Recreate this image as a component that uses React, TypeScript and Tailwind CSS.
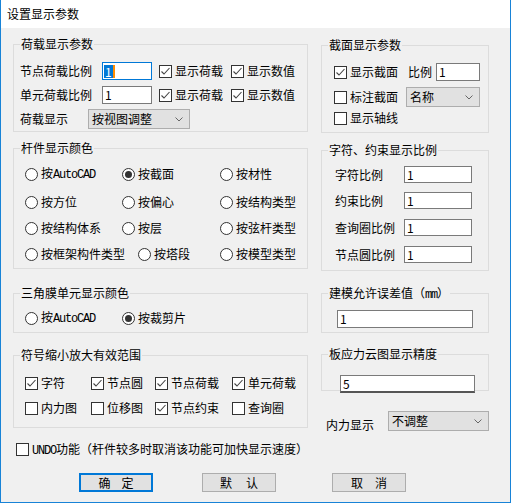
import React from "react";

const mono = "font-['Liberation_Mono',monospace] tracking-[-1.2px]";

function CheckBox({ checked }: { checked?: boolean }) {
  return (
    <span className="flex h-[13px] w-[13px] shrink-0 items-center justify-center border border-[#333333] bg-white">
      {checked && (
        <svg width="11" height="11" viewBox="0 0 11 11">
          <path d="M1.5 5.5L4 8L9.5 2" fill="none" stroke="#444444" strokeWidth="1.1" />
        </svg>
      )}
    </span>
  );
}

function Radio({ checked }: { checked?: boolean }) {
  return (
    <span className="flex h-[13px] w-[13px] shrink-0 items-center justify-center rounded-full border border-[#333333] bg-white">
      {checked && <span className="h-[7px] w-[7px] rounded-full bg-[#333333]" />}
    </span>
  );
}

function Check({ label, checked, className = "" }: { label: React.ReactNode; checked?: boolean; className?: string }) {
  return (
    <div className={`flex items-center gap-[3px] ${className}`}>
      <CheckBox checked={checked} />
      <span className="whitespace-nowrap">{label}</span>
    </div>
  );
}

function Option({ label, checked, className = "" }: { label: React.ReactNode; checked?: boolean; className?: string }) {
  return (
    <div className={`flex items-center gap-[3px] ${className}`}>
      <Radio checked={checked} />
      <span className="whitespace-nowrap">{label}</span>
    </div>
  );
}

function Group({ title, className = "", children }: { title: React.ReactNode; className?: string; children: React.ReactNode }) {
  return (
    <div className={`relative border border-[#dcdcdc] ${className}`}>
      <span className="absolute -top-[9px] left-[6px] bg-[#f0f0f0] px-[1px] leading-[16px] whitespace-nowrap">{title}</span>
      {children}
    </div>
  );
}

function Edit({ value, className = "" }: { value: string; className?: string }) {
  return (
    <div className={`flex items-center border border-[#7a7a7a] bg-white pl-[2px] ${className}`}>
      {value}
    </div>
  );
}

function Combo({ value, className = "" }: { value: string; className?: string }) {
  return (
    <div className={`flex items-center justify-between border border-[#adadad] bg-[#e1e1e1] pl-[3px] pr-[6px] ${className}`}>
      <span className="whitespace-nowrap">{value}</span>
      <svg width="8" height="5" viewBox="0 0 8 5">
        <path d="M0.5 0.5L4 4L7.5 0.5" fill="none" stroke="#666666" />
      </svg>
    </div>
  );
}

function Button({ a, b, gap, primary }: { a: string; b: string; gap: string; primary?: boolean }) {
  return (
    <div
      className={`flex h-[19px] w-[74px] items-center justify-center bg-[#e1e1e1] ${gap} ${
        primary ? "border-2 border-[#0078d7]" : "border border-[#adadad]"
      }`}
    >
      <span>{a}</span>
      <span>{b}</span>
    </div>
  );
}

export default function App() {
  const Auto = <span className={mono}>AutoCAD</span>;

  return (
    <div className="flex h-[503px] w-[511px] flex-col border-x border-b border-[#1883d7] bg-[#f0f0f0] font-['Noto_Sans_CJK_SC','Noto_Sans',sans-serif] text-[12px] leading-[16px] text-black">
      {/* title bar */}
      <div className="flex h-[28px] shrink-0 items-center bg-white pl-[6px]">设置显示参数</div>

      <div className="flex gap-[13px] pl-[12px]">
        {/* left column */}
        <div className="flex w-[295px] flex-col">
          <Group title="荷载显示参数" className="mt-[16px] h-[88px] pl-[6px] pt-[17px]">
            <div className="flex h-[18px] items-center">
              <span className="w-[82px]">节点荷载比例</span>
              <div className="flex h-[18px] w-[50px] items-center border border-[#0078d7] bg-white pl-[1px]">
                <span className="bg-[#0078d7] px-[1px] leading-[13px] text-white">1</span>
                <span className="h-[13px] w-[2px] bg-[#ff8c00]" />
              </div>
              <Check label="显示荷载" checked className="ml-[7px] w-[72px]" />
              <Check label="显示数值" checked />
            </div>
            <div className="mt-[6px] flex h-[18px] items-center">
              <span className="w-[82px]">单元荷载比例</span>
              <Edit value="1" className="h-[18px] w-[50px]" />
              <Check label="显示荷载" checked className="ml-[7px] w-[72px]" />
              <Check label="显示数值" checked />
            </div>
            <div className="mt-[5px] flex items-center">
              <span className="w-[68px]">荷载显示</span>
              <Combo value="按视图调整" className="h-[20px] w-[102px]" />
            </div>
          </Group>

          <Group title="杆件显示颜色" className="mt-[16px] h-[121px] pl-[11px] pt-[17px]">
            <div className="flex h-[16px] items-center">
              <Option label={<>按{Auto}</>} className="w-[97px]" />
              <Option label="按截面" checked className="w-[98px]" />
              <Option label="按材性" />
            </div>
            <div className="mt-[12px] flex h-[16px] items-center">
              <Option label="按方位" className="w-[97px]" />
              <Option label="按偏心" className="w-[98px]" />
              <Option label="按结构类型" />
            </div>
            <div className="mt-[10px] flex h-[16px] items-center">
              <Option label="按结构体系" className="w-[97px]" />
              <Option label="按层" className="w-[98px]" />
              <Option label="按弦杆类型" />
            </div>
            <div className="mt-[10px] flex h-[16px] items-center">
              <Option label="按框架构件类型" className="w-[113px]" />
              <Option label="按塔段" className="w-[82px]" />
              <Option label="按模型类型" />
            </div>
          </Group>

          <Group title="三角膜单元显示颜色" className="mt-[24px] h-[40px] pl-[11px] pt-[16px]">
            <div className="flex h-[16px] items-center">
              <Option label={<>按{Auto}</>} className="w-[97px]" />
              <Option label="按裁剪片" checked />
            </div>
          </Group>

          <Group title="符号缩小放大有效范围" className="mt-[22px] h-[73px] pl-[11px] pt-[19px]">
            <div className="flex h-[16px] items-center">
              <Check label="字符" checked className="w-[66px]" />
              <Check label="节点圆" checked className="w-[64px]" />
              <Check label="节点荷载" checked className="w-[77px]" />
              <Check label="单元荷载" checked />
            </div>
            <div className="mt-[9px] flex h-[16px] items-center">
              <Check label="内力图" className="w-[66px]" />
              <Check label="位移图" className="w-[64px]" />
              <Check label="节点约束" checked className="w-[77px]" />
              <Check label="查询圈" />
            </div>
          </Group>
        </div>

        {/* right column */}
        <div className="flex w-[168px] flex-col">
          <Group title="截面显示参数" className="mt-[17px] h-[88px] pl-[12px] pt-[17px]">
            <div className="flex h-[18px] items-center">
              <Check label="显示截面" checked />
              <span className="ml-[10px]">比例</span>
              <Edit value="1" className="ml-[4px] h-[18px] w-[44px]" />
            </div>
            <div className="mt-[6px] flex h-[20px] items-center">
              <Check label="标注截面" />
              <Combo value="名称" className="ml-[8px] h-[20px] w-[74px]" />
            </div>
            <div className="mt-[3px] flex h-[16px] items-center">
              <Check label="显示轴线" />
            </div>
          </Group>

          <Group title="字符、约束显示比例" className="mt-[17px] h-[121px] pl-[13px] pt-[15px]">
            {[
              ["字符比例", "mt-0"],
              ["约束比例", "mt-[9px]"],
              ["查询圈比例", "mt-[10px]"],
              ["节点圆比例", "mt-[10px]"],
            ].map(([label, mt]) => (
              <div key={label} className={`flex h-[17px] items-center ${mt}`}>
                <span className="w-[69px] whitespace-nowrap">{label}</span>
                <Edit value="1" className="h-[17px] w-[68px]" />
              </div>
            ))}
          </Group>

          <Group
            title={<>建模允许误差值（<span className={mono}>mm</span>）</>}
            className="mt-[22px] h-[40px] pl-[15px] pt-[16px]"
          >
            <Edit value="1" className="h-[18px] w-[136px]" />
          </Group>

          <Group title="板应力云图显示精度" className="mt-[21px] h-[37px] pl-[18px] pt-[20px]">
            <Edit value="5" className="h-[18px] w-[135px] border-b-2 border-b-[#555555]" />
          </Group>

          <div className="mt-[20px] flex items-start pl-[5px]">
            <span className="mt-[6px] w-[62px]">内力显示</span>
            <Combo value="不调整" className="h-[20px] w-[101px]" />
          </div>
        </div>
      </div>

      <div className="mt-[10px] flex h-[13px] items-center gap-[3px] pl-[15px]">
        <CheckBox />
        <span className="whitespace-nowrap">
          <span className={mono}>UNDO</span>功能（杆件较多时取消该功能可加快显示速度）
        </span>
      </div>

      <div className="mt-[17px] flex pl-[78px]">
        <Button a="确" b="定" gap="gap-[11px]" primary />
        <div className="ml-[49px]">
          <Button a="默" b="认" gap="gap-[14px]" />
        </div>
        <div className="ml-[56px]">
          <Button a="取" b="消" gap="gap-[12px]" />
        </div>
      </div>
    </div>
  );
}
